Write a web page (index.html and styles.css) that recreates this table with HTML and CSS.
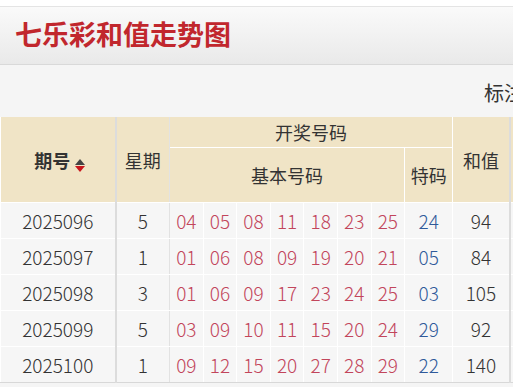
FILE: index.html
```html
<!DOCTYPE html>
<html lang="zh-CN">
<head>
<meta charset="utf-8">
<title>七乐彩和值走势图</title>
<link rel="stylesheet" href="styles.css">
</head>
<body>
<div class="topline"></div>
<header class="banner"><h1 class="title">七乐彩和值走势图</h1></header>
<div class="toolbar"><span class="mark">标注</span></div>
<table class="chart">
  <colgroup>
    <col class="c-issue"><col class="c-week">
    <col class="c-num"><col class="c-num"><col class="c-num"><col class="c-num"><col class="c-num"><col class="c-num"><col class="c-num">
    <col class="c-sp"><col class="c-sum"><col class="c-more">
  </colgroup>
  <thead>
    <tr class="h1">
      <th rowspan="2" class="issue g">期号<span class="sort"><i class="up"></i><i class="down"></i></span></th>
      <th rowspan="2" class="week g">星期</th>
      <th colspan="8" class="open">开奖号码</th>
      <th rowspan="2" class="sum g">和值</th>
      <th rowspan="2" class="more g"></th>
    </tr>
    <tr class="h2">
      <th colspan="7" class="basic">基本号码</th>
      <th class="spc">特码</th>
    </tr>
  </thead>
  <tbody>
    <tr><td class="g">2025096</td><td class="week g">5</td><td class="r first">04</td><td class="r">05</td><td class="r">08</td><td class="r">11</td><td class="r">18</td><td class="r">23</td><td class="r">25</td><td class="b">24</td><td class="sum g">94</td><td class="more g"></td></tr>
    <tr><td class="g">2025097</td><td class="week g">1</td><td class="r first">01</td><td class="r">06</td><td class="r">08</td><td class="r">09</td><td class="r">19</td><td class="r">20</td><td class="r">21</td><td class="b">05</td><td class="sum g">84</td><td class="more g"></td></tr>
    <tr><td class="g">2025098</td><td class="week g">3</td><td class="r first">01</td><td class="r">06</td><td class="r">09</td><td class="r">17</td><td class="r">23</td><td class="r">24</td><td class="r">25</td><td class="b">03</td><td class="sum g">105</td><td class="more g"></td></tr>
    <tr><td class="g">2025099</td><td class="week g">5</td><td class="r first">03</td><td class="r">09</td><td class="r">10</td><td class="r">11</td><td class="r">15</td><td class="r">20</td><td class="r">24</td><td class="b">29</td><td class="sum g">92</td><td class="more g"></td></tr>
    <tr><td class="g">2025100</td><td class="week g">1</td><td class="r first">09</td><td class="r">12</td><td class="r">15</td><td class="r">20</td><td class="r">27</td><td class="r">28</td><td class="r">29</td><td class="b">22</td><td class="sum g">140</td><td class="more g"></td></tr>
  </tbody>
</table>
</body>
</html>
```
FILE: styles.css
```css
html, body {
  margin: 0;
  padding: 0;
  overflow: hidden;
  background: #f5f5f5;
  font-family: "Noto Sans", "Noto Sans CJK SC", sans-serif;
  color: #333;
}
.topline {
  height: 6px;
  background: #fff;
  border-bottom: 1px solid #e4e4e4;
}
.banner {
  height: 57px;
  background: linear-gradient(#fafafa, #e9e9e9);
  border-bottom: 1px solid #d9d9d9;
  display: flex;
  align-items: center;
}
.title {
  margin: 0 0 0 15px;
  font-family: "Noto Sans CJK SC", sans-serif;
  font-size: 27px;
  font-weight: 700;
  color: #c1272d;
  line-height: 1;
  position: relative;
  top: -2px;
}
.toolbar {
  height: 52px;
  display: flex;
  align-items: center;
  padding-left: 484px;
  white-space: nowrap;
}
.mark {
  font-family: "Noto Sans CJK SC", sans-serif;
  font-size: 20px;
  color: #333;
  margin-top: 2px;
}
.chart {
  border-collapse: collapse;
  table-layout: fixed;
  width: 560px;
  font-size: 18px;
}
.c-issue { width: 115px; }
.c-week { width: 54px; }
.c-num { width: 33.6px; }
.c-sp { width: 48px; }
.c-sum { width: 57px; }
.c-more { width: 50px; }
th, td {
  padding: 0;
  text-align: center;
  border: 1px solid #fff;
  white-space: nowrap;
  overflow: hidden;
}
th {
  background: #f0e4c6;
  font-weight: 400;
  font-family: "Noto Sans CJK SC", sans-serif;
  color: #333;
}
td {
  background: #f6f6f6;
  height: 35px;
  line-height: 35px;
  font-family: "Noto Sans CJK SC", sans-serif;
  font-weight: 300;
  font-size: 19px;
}
.g { border-right: 2px solid #dcdcdc; }
.week { border-right: 1px solid #e2e2e2; }
.h1 th { height: 30px; }
.h2 th { height: 54px; }
.issue { font-weight: 700; padding-left: 4px; }
.sort {
  display: inline-flex;
  flex-direction: column;
  gap: 1px;
  margin-left: 5px;
  vertical-align: 3px;
}
.sort i {
  display: block;
  width: 0;
  height: 0;
  border-left: 5px solid transparent;
  border-right: 5px solid transparent;
}
.sort .up { border-bottom: 6px solid #444; }
.sort .down { border-top: 6px solid #c8161d; }
.r { color: #c2455b; }
.b { color: #2f5a9a; }
.sum { color: #333; }
.chart thead tr:first-child th { border-top: 0; }
.chart tbody tr:last-child td { border-bottom: 1px solid #d8d8d8; }
```
